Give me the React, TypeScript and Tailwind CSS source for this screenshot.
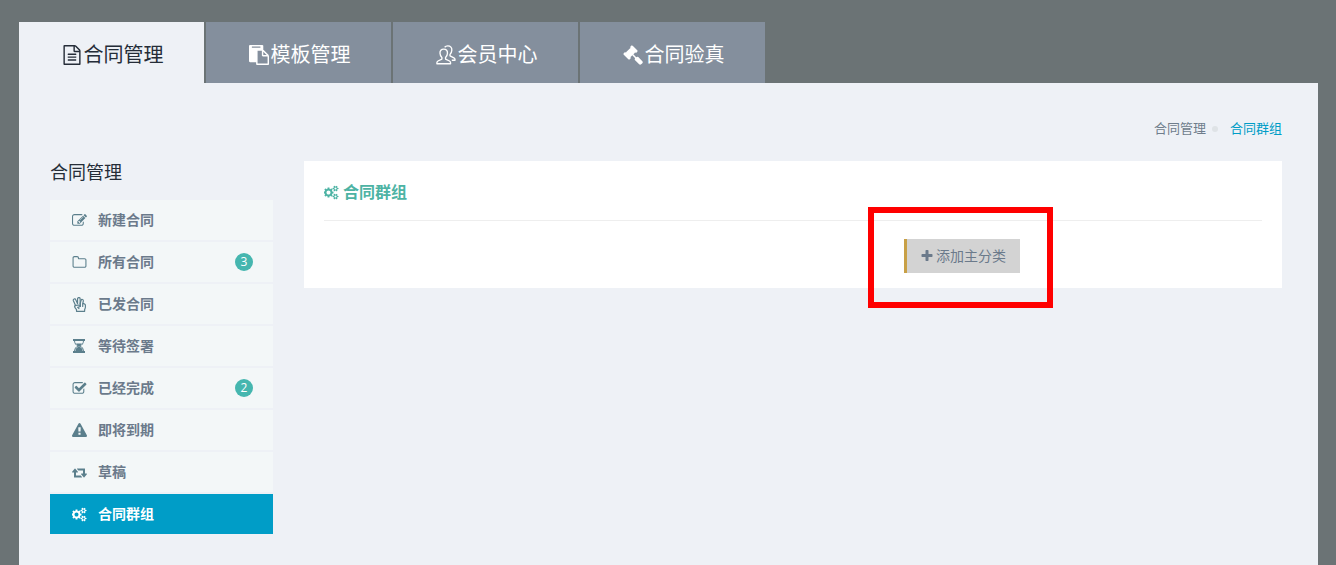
import type { ReactNode } from "react";

type IconProps = { className?: string };

function Icon({ d, w = 1792, y = 0, className }: { d: string; w?: number; y?: number; className?: string }) {
  return (
    <svg viewBox={`0 ${y} ${w} 1792`} fill="currentColor" aria-hidden="true" className={className}>
      <path d={d} />
    </svg>
  );
}

const FileText = (p: IconProps) => (
  <Icon {...p} d="M1596 380q28 28 48 76t20 88v1152q0 40-28 68t-68 28h-1344q-40 0-68-28t-28-68v-1600q0-40 28-68t68-28h896q40 0 88 20t76 48zm-444-244v376h376q-10-29-22-41l-313-313q-12-12-41-22zm384 1528v-1024h-416q-40 0-68-28t-28-68v-416h-768v1536h1280zm-1024-864q0-14 9-23t23-9h704q14 0 23 9t9 23v64q0 14-9 23t-23 9h-704q-14 0-23-9t-9-23v-64zm736 224q14 0 23 9t9 23v64q0 14-9 23t-23 9h-704q-14 0-23-9t-9-23v-64q0-14 9-23t23-9h704zm0 256q14 0 23 9t9 23v64q0 14-9 23t-23 9h-704q-14 0-23-9t-9-23v-64q0-14 9-23t23-9h704z" />
);

const Paste = (p: IconProps) => (
  <Icon {...p} d="M768 1664h896v-640h-416q-40 0-68-28t-28-68v-416h-384v1152zm256-1440v-64q0-13-9.500-22.500t-22.500-9.500h-704q-13 0-22.500 9.500t-9.500 22.500v64q0 13 9.500 22.500t22.500 9.500h704q13 0 22.500-9.500t9.500-22.500zm256 672h299l-299-299v299zm512 128v672q0 40-28 68t-68 28h-960q-40 0-68-28t-28-68v-160h-544q-40 0-68-28t-28-68v-1344q0-40 28-68t68-28h1088q40 0 68 28t28 68v328q21 13 36 28l408 408q28 28 48 76t20 88z" />
);

const Gavel = (p: IconProps) => (
  <Icon {...p} d="M1771 1536q0 53-37 90l-107 108q-39 37-91 37-53 0-90-37l-363-364q-38-36-38-90 0-53 43-96l-256-256-126 126q-14 14-34 14t-34-14q2 2 12.500 12t12.500 13 10 11.500 10 13.500 6 13.500 5.500 16.500 1.500 18q0 38-28 68-3 3-16.500 18t-19 20.500-18.500 16.500-22 15.500-22 9-26 4.500q-40 0-68-28l-408-408q-28-28-28-68 0-13 4.500-26t9-22 15.500-22 16.500-18.500 20.500-19 18-16.500q30-28 68-28 10 0 18 1.500t16.500 5.500 13.500 6 13.500 10 11.500 10 13 12.500 12 12.500q-14-14-14-34t14-34l348-348q14-14 34-14t34 14q-2-2-12.500-12t-12.500-13-10-11.500-10-13.500-6-13.500-5.500-16.500-1.500-18q0-38 28-68 3-3 16.500-18t19-20.500 18.500-16.500 22-15.500 22-9 26-4.500q40 0 68 28l408 408q28 28 28 68 0 13-4.500 26t-9 22-15.500 22-16.500 18.500-20.500 19-18 16.500q-30 28-68 28-10 0-18-1.500t-16.500-5.500-13.500-6-13.500-10-11.500-10-13-12.500-12-12.500q14 14 14 34t-14 34l-126 126 256 256q43-43 96-43 52 0 91 37l363 363q37 39 37 91z" />
);

function Members({ className }: IconProps) {
  return (
    <svg viewBox="0 0 22 22" fill="none" stroke="currentColor" strokeWidth="1.5" strokeLinejoin="round" aria-hidden="true" className={className}>
      <path d="M8.500 4.500c-2.800 0-4.300 1.900-4.100 4.600.1 2 .9 3.600 2.100 4.700v1.700l-4.300 2.100c-.8.400-1.200 1.100-1.200 2v1h15v-1c0-.9-.4-1.600-1.200-2l-4.300-2.100v-1.700c1.200-1.100 2-2.700 2.100-4.700.2-2.700-1.300-4.600-4.100-4.600z" />
      <path d="M9.500 2.400c.8-.9 2-1.400 3.500-1.400 3 0 4.600 2 4.400 4.700-.1 2-.9 3.500-2 4.600v1.600l4.300 2.200c.8.400 1.200 1 1.200 1.900v.8h-3.500" />
    </svg>
  );
}

const Edit = (p: IconProps) => (
  <Icon {...p} d="M888 1184l116-116-152-152-116 116v56h96v96h56zm440-720q-16-16-33 1l-350 350q-17 17-1 33t33-1l350-350q17-17 1-33zm80 594v190q0 119-84.500 203.500t-203.500 84.500h-832q-119 0-203.500-84.500t-84.500-203.500v-832q0-119 84.500-203.500t203.500-84.500h832q63 0 117 25 15 7 18 23 3 17-9 29l-49 49q-14 14-32 8-23-6-45-6h-832q-66 0-113 47t-47 113v832q0 66 47 113t113 47h832q66 0 113-47t47-113v-126q0-13 9-22l64-64q15-15 35-7t20 29zm-96-738l288 288-672 672h-288v-288zm444 132l-92 92-288-288 92-92q28-28 68-28t68 28l152 152q28 28 28 68t-28 68z" />
);

const Folder = (p: IconProps) => (
  <Icon {...p} d="M1600 1312v-704q0-40-28-68t-68-28h-704q-40 0-68-28t-28-68v-64q0-40-28-68t-68-28h-320q-40 0-68 28t-28 68v960q0 40 28 68t68 28h1216q40 0 68-28t28-68zm128-704v704q0 92-66 158t-158 66h-1216q-92 0-158-66t-66-158v-960q0-92 66-158t158-66h320q92 0 158 66t66 158v32h672q92 0 158 66t66 158z" />
);

function Peace({ className }: IconProps) {
  return (
    <svg viewBox="0 0 14 14" fill="none" stroke="currentColor" strokeWidth="1.1" strokeLinejoin="round" strokeLinecap="round" aria-hidden="true" className={className}>
      <path d="M3.400 8.200 1.300 3.500C.7 1.800 2.900 1 3.500 2.500L5.200 6.300V1.700c0-1.600 2.400-1.600 2.400 0v4.600" />
      <path d="M7.600 6.300 8.500 3c.4-1.200 2.300-.7 2.100.6L10 6.300c1.400-.4 2.500.3 2.500 1.500v1.800c0 .9-.5 1.400-.7 2.200v1.600H4.200v-1.600L2.800 9.900c-.8-1.100-.2-2 .8-2.100l3.200-.3c1.200 0 1.200 1.500.1 1.700l-1.600.4 1.200 1.200" />
      <path d="M7.800 6.600v2.200M10 6.500v2.300" />
    </svg>
  );
}

function Hourglass({ className }: IconProps) {
  return (
    <svg viewBox="0 0 14 14" fill="currentColor" aria-hidden="true" className={className}>
      <path d="M1 0h12v2H1zM1 12h12v2H1z" />
      <path d="M2.500 1.500c0 3 1.500 4.500 3.500 5.500-2 1-3.500 2.500-3.500 5.500M11.500 1.500c0 3-1.500 4.500-3.500 5.500 2 1 3.500 2.500 3.500 5.500" fill="none" stroke="currentColor" />
      <path d="M4 4.500h6L7.500 7.500 10.500 10v2h-7v-2l3-2.500z" />
    </svg>
  );
}

const CheckSquare = (p: IconProps) => (
  <Icon {...p} d="M1472 930v318q0 119-84.500 203.500t-203.500 84.500h-832q-119 0-203.500-84.500t-84.500-203.500v-832q0-119 84.500-203.500t203.500-84.500h832q63 0 117 25 15 7 18 23 3 17-9 29l-49 49q-10 10-23 10-3 0-9-2-23-6-45-6h-832q-66 0-113 47t-47 113v832q0 66 47 113t113 47h832q66 0 113-47t47-113v-254q0-13 9-22l64-64q10-10 23-10 6 0 12 3 20 8 20 29zm231-489l-814 814q-24 24-57 24t-57-24l-430-430q-24-24-24-57t24-57l110-110q24-24 57-24t57 24l263 263 647-647q24-24 57-24t57 24l110 110q24 24 24 57t-24 57z" />
);

const Warning = (p: IconProps) => (
  <Icon {...p} d="M1024 1375v-190q0-14-9.500-23.500t-22.500-9.500h-192q-13 0-22.500 9.500t-9.500 23.500v190q0 14 9.500 23.500t22.500 9.500h192q13 0 22.500-9.500t9.500-23.500zm-2-374l18-459q0-12-10-19-13-11-24-11h-220q-11 0-24 11-10 7-10 21l17 457q0 10 10 16.500t24 6.500h185q14 0 23.500-6.500t10.500-16.500zm-14-934l768 1408q35 63-2 126-17 29-46.500 46t-63.500 17h-1536q-34 0-63.500-17t-46.500-46q-37-63-2-126l768-1408q17-31 47-49t65-18 65 18 47 49z" />
);

const Retweet = (p: IconProps) => (
  <Icon {...p} w={1920} y={128} d="M1280 1632q0 13-9.500 22.500t-22.500 9.500h-960q-8 0-13.500-2t-9-7-5.500-8-3-11.500-1-11.500v-600h-192q-26 0-45-19t-19-45q0-24 15-41l320-384q19-22 49-22t49 22l320 384q15 17 15 41 0 26-19 45t-45 19h-192v384h576q16 0 25 11l160 192q7 10 7 21zm640-416q0 24-15 41l-320 384q-20 23-49 23t-49-23l-320-384q-15-17-15-41 0-26 19-45t45-19h192v-384h-576q-16 0-25-12l-160-192q-7-9-7-20 0-13 9.500-22.500t22.500-9.500h960q8 0 13.500 2t9 7 5.500 8 3 11.500 1 11.500v600h192q26 0 45 19t19 45z" />
);

const Cogs = (p: IconProps) => (
  <Icon {...p} w={1920} d="M832 896q0-106-75-181t-181-75-181 75-75 181 75 181 181 75 181-75 75-181zm768 512q0-52-38-90t-90-38-90 38-38 90q0 53 37.500 90.500t90.500 37.500 90.500-37.500 37.500-90.500zm0-1024q0-52-38-90t-90-38-90 38-38 90q0 53 37.500 90.500t90.500 37.500 90.500-37.500 37.500-90.500zm-384 421v185q0 10-7 19.500t-16 10.500l-155 24q-11 35-32 76 34 48 90 115 7 11 7 20 0 12-7 19-23 30-82.500 89.500t-78.500 59.500q-11 0-21-7l-115-90q-37 19-77 31-11 108-23 155-7 24-30 24h-186q-11 0-20-7.500t-10-17.500l-23-153q-34-10-75-31l-118 89q-7 7-20 7-11 0-21-8-144-133-144-160 0-9 7-19 10-14 41-53t47-61q-23-44-35-82l-152-24q-10-1-17-9.500t-7-19.500v-185q0-10 7-19.500t16-10.500l155-24q11-35 32-76-34-48-90-115-7-11-7-20 0-12 7-20 22-30 82-89t79-59q11 0 21 7l115 90q34-18 77-32 11-108 23-154 7-24 30-24h186q11 0 20 7.500t10 17.500l23 153q34 10 75 31l118-89q8-7 20-7 11 0 21 8 144 133 144 160 0 8-7 19-12 16-42 54t-45 60q23 48 34 82l152 23q10 2 17 10.500t7 19.500zm640 533v140q0 16-149 31-12 27-30 52 51 113 51 138 0 4-4 7-122 71-124 71-8 0-46-47t-52-68q-20 2-30 2t-30-2q-14 21-52 68t-46 47q-2 0-124-71-4-3-4-7 0-25 51-138-18-25-30-52-149-15-149-31v-140q0-16 149-31 13-29 30-52-51-113-51-138 0-4 4-7 4-2 35-20t59-34 30-16q8 0 46 46.500t52 67.500q20-2 30-2t30 2q51-71 92-112l6-2q4 0 124 70 4 3 4 7 0 25-51 138 17 23 30 52 149 15 149 31zm0-1024v140q0 16-149 31-12 27-30 52 51 113 51 138 0 4-4 7-122 71-124 71-8 0-46-47t-52-68q-20 2-30 2t-30-2q-14 21-52 68t-46 47q-2 0-124-71-4-3-4-7 0-25 51-138-18-25-30-52-149-15-149-31v-140q0-16 149-31 13-29 30-52-51-113-51-138 0-4 4-7 4-2 35-20t59-34 30-16q8 0 46 46.500t52 67.500q20-2 30-2t30 2q51-71 92-112l6-2q4 0 124 70 4 3 4 7 0 25-51 138 17 23 30 52 149 15 149 31z" />
);

const Plus = (p: IconProps) => (
  <Icon {...p} d="M1600 736v192q0 40-28 68t-68 28h-416v416q0 40-28 68t-68 28h-192q-40 0-68-28t-28-68v-416h-416q-40 0-68-28t-28-68v-192q0-40 28-68t68-28h416v-416q0-40 28-68t68-28h192q40 0 68 28t28 68v416h416q40 0 68 28t28 68z" />
);

const TABS: { label: string; icon: ReactNode; active?: boolean }[] = [
  { label: "合同管理", icon: <FileText className="size-5" />, active: true },
  { label: "模板管理", icon: <Paste className="size-5" /> },
  { label: "会员中心", icon: <Members className="size-5" /> },
  { label: "合同验真", icon: <Gavel className="size-5" /> },
];

const MENU: { label: string; icon: ReactNode; count?: number; active?: boolean }[] = [
  { label: "新建合同", icon: <Edit className="size-[15px]" /> },
  { label: "所有合同", icon: <Folder className="size-[15px]" />, count: 3 },
  { label: "已发合同", icon: <Peace className="size-[15px]" /> },
  { label: "等待签署", icon: <Hourglass className="size-3.5" /> },
  { label: "已经完成", icon: <CheckSquare className="size-[15px]" />, count: 2 },
  { label: "即将到期", icon: <Warning className="size-[15px]" /> },
  { label: "草稿", icon: <Retweet className="size-[15px]" /> },
  { label: "合同群组", icon: <Cogs className="size-[15px]" />, active: true },
];

export default function App() {
  return (
    <div className="min-h-screen flex flex-col bg-[#6b7375] pt-[22px] pl-[19px] pr-[18px] font-['Liberation_Sans','Noto_Sans_CJK_SC',sans-serif]">
      {/* Top tabs */}
      <nav className="flex gap-0.5">
        {TABS.map(({ label, icon, active }) => (
          <a
            key={label}
            href="#"
            className={`flex items-center justify-center gap-0.5 w-[185px] h-[61px] pt-1 pl-0.5 text-xl ${
              active ? "bg-[#eef1f6] text-[#252d38]" : "bg-[#848f9d] text-white"
            }`}
          >
            {icon}
            <span>{label}</span>
          </a>
        ))}
      </nav>

      <main className="flex-1 bg-[#eef1f6] pl-[31px] pr-9 pt-9 pb-8">
        {/* Breadcrumb */}
        <div className="flex items-center justify-end h-5 text-[13px]">
          <a href="#" className="text-[#6f7d8c]">合同管理</a>
          <span className="size-[6px] rounded-full bg-[#dfe3e6] ml-1.5 mr-3" />
          <a href="#" className="text-[#009dc7]">合同群组</a>
        </div>

        <div className="flex items-start gap-[31px] mt-[22px]">
          {/* Sidebar */}
          <aside className="w-[223px] shrink-0">
            <h2 className="h-[39px] text-lg leading-6 text-[#252d38]">合同管理</h2>
            <ul className="flex flex-col gap-0.5">
              {MENU.map(({ label, icon, count, active }) => (
                <li key={label}>
                  <a
                    href="#"
                    className={`flex items-center h-10 pl-[21px] pr-5 text-sm font-bold ${
                      active ? "bg-[#009dc7] text-white" : "bg-[#f3f7f8] text-[#6b7a8b]"
                    }`}
                  >
                    <span className={`flex justify-center w-4 mr-[11px] ${active ? "text-white" : "text-[#5b7f8c]"}`}>{icon}</span>
                    <span>{label}</span>
                    {count && (
                      <span className="ml-auto size-[18px] rounded-full bg-[#45b6af] text-white text-xs leading-[17px] font-normal text-center font-['Open_Sans',sans-serif]">
                        {count}
                      </span>
                    )}
                  </a>
                </li>
              ))}
            </ul>
          </aside>

          {/* Group panel */}
          <section className="flex-1 bg-white px-5 pb-[15px]">
            <h1 className="flex items-center gap-1 h-[60px] pt-1 border-b border-[#eeeeee] text-base font-bold text-[#4db3a4]">
              <Cogs className="size-[15px]" />
              合同群组
            </h1>
            <div className="flex justify-end pt-[18px] pr-[242px]">
              <div className="relative">
                <button type="button" className="flex items-center gap-0.5 h-[34px] pl-[13px] pr-3.5 border-l-3 border-[#c8a046] bg-[#d3d3d3] text-sm text-[#6b7a8b]">
                  <Plus className="size-3.5" />
                  添加主分类
                </button>
                <span className="absolute -left-9 -right-[33px] -top-8 -bottom-[35px] border-6 border-[#ff0000] pointer-events-none" />
              </div>
            </div>
          </section>
        </div>
      </main>
    </div>
  );
}
